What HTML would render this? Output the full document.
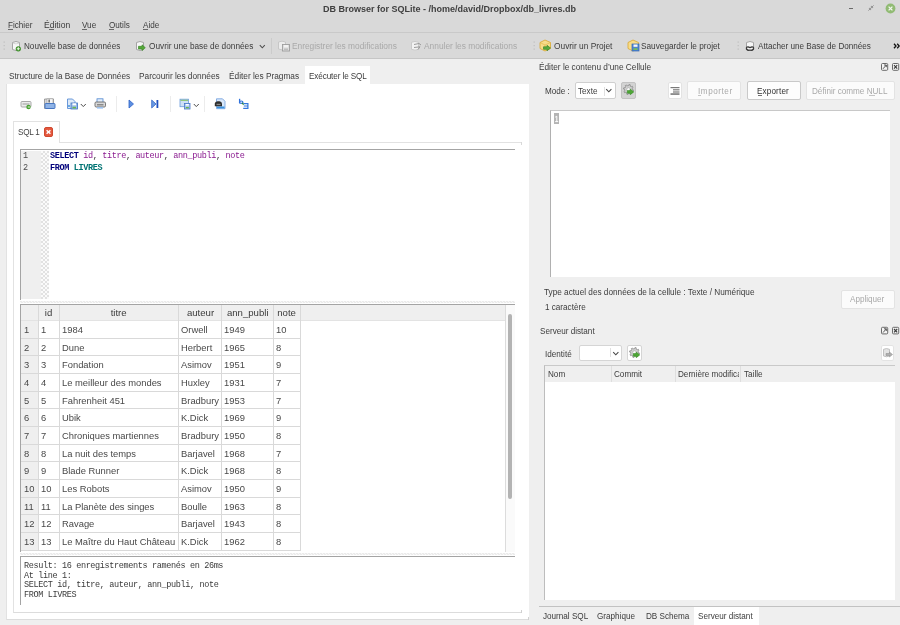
<!DOCTYPE html>
<html><head><meta charset="utf-8">
<style>
*{box-sizing:border-box;margin:0;padding:0}
html,body{width:900px;height:625px;overflow:hidden}
body{position:relative;background:#efefef;font-family:"Liberation Sans",sans-serif;font-size:8.15px;color:#3c3c3c}
.a{position:absolute}
.t{position:absolute;white-space:pre;line-height:10px;will-change:transform}
.mono{font-family:"Liberation Mono",monospace}
.dis{color:#a9a9a9}
.cell{font-size:9.4px;color:#484848}
.btn{position:absolute;background:#fbfbfb;border:1px solid #cfcfcf;border-radius:2px}
</style></head><body>

<!-- title + menu bar -->
<div class="a" style="left:0;top:0;width:900px;height:33px;background:#d9d9d9"></div>
<div class="a" style="left:0;top:32px;width:900px;height:1px;background:#c9c9c9"></div>
<div class="t" style="left:323px;top:4px;font-weight:bold;font-size:9px;color:#404040">DB Browser for SQLite - /home/david/Dropbox/db_livres.db</div>
<!-- window controls -->
<div class="a" style="left:848.5px;top:8px;width:4.5px;height:1px;background:#6a6a6a"></div>
<svg class="a" style="left:868px;top:5px" width="6" height="6" viewBox="0 0 6 6"><path d="M5.6 0.4L3.6 2.4M3.4 0.9V2.6H5.1M0.4 5.6L2.4 3.6M0.9 3.4H2.6V5.1" stroke="#8a8a8a" stroke-width="0.9" fill="none"/></svg>
<svg class="a" style="left:885px;top:3px" width="11" height="11" viewBox="0 0 11 11"><circle cx="5.5" cy="5.5" r="4.9" fill="#91bb74"/><path d="M3.6 3.6L7.4 7.4M7.4 3.6L3.6 7.4" stroke="#f4f8f0" stroke-width="1.3"/></svg>

<div class="t" style="left:8px;top:20.5px">Fichier</div>
<div class="t" style="left:44.2px;top:19.8px;font-size:8.55px">Édition</div>
<div class="t" style="left:82px;top:20.5px">Vue</div>
<div class="t" style="left:108.5px;top:20.5px">Outils</div>
<div class="t" style="left:142.5px;top:20.5px">Aide</div>


<div class="a" style="left:8px;top:29px;width:4.5px;height:1px;background:#6a6a6a"></div>
<div class="a" style="left:49px;top:29px;width:4.5px;height:1px;background:#6a6a6a"></div>
<div class="a" style="left:82px;top:29px;width:5px;height:1px;background:#6a6a6a"></div>
<div class="a" style="left:108.5px;top:29px;width:5.5px;height:1px;background:#6a6a6a"></div>
<div class="a" style="left:142.5px;top:29px;width:5px;height:1px;background:#6a6a6a"></div>
<!-- main toolbar -->
<div class="a" style="left:0;top:33px;width:900px;height:25px;background:#d9d9d9"></div>
<div class="a" style="left:0;top:58px;width:900px;height:1px;background:#c6c6c6"></div>

<!-- toolbar handles -->
<svg class="a" style="left:3px;top:41px" width="3" height="10"><rect x="0.5" y="0.5" width="1.5" height="1.2" fill="#c4c4c4"/><rect x="0.5" y="4" width="1.5" height="1.2" fill="#c4c4c4"/><rect x="0.5" y="7.5" width="1.5" height="1.2" fill="#c4c4c4"/></svg>
<svg class="a" style="left:533px;top:41px" width="3" height="10"><rect x="0.5" y="0.5" width="1.5" height="1.2" fill="#c4c4c4"/><rect x="0.5" y="4" width="1.5" height="1.2" fill="#c4c4c4"/><rect x="0.5" y="7.5" width="1.5" height="1.2" fill="#c4c4c4"/></svg>
<svg class="a" style="left:737px;top:41px" width="3" height="10"><rect x="0.5" y="0.5" width="1.5" height="1.2" fill="#c4c4c4"/><rect x="0.5" y="4" width="1.5" height="1.2" fill="#c4c4c4"/><rect x="0.5" y="7.5" width="1.5" height="1.2" fill="#c4c4c4"/></svg>
<div class="a" style="left:271px;top:38px;width:1px;height:16px;background:#cbcbcb"></div>
<svg class="a" style="left:259px;top:44px" width="7" height="6"><path d="M0.8 1.2L3.3 3.8L5.8 1.2" stroke="#505050" stroke-width="1.1" fill="none"/></svg>
<!-- icon 1: new db -->
<svg class="a" style="left:11px;top:40px" width="12" height="12" viewBox="0 0 12 12">
<path d="M1.5 2.5Q5 0.5 8.5 2.5V9.5Q5 11.5 1.5 9.5Z" fill="#f6f6f6" stroke="#9c9c9c" stroke-width="0.9"/>
<path d="M1.5 3Q5 4.8 8.5 3" stroke="#c8c8c8" stroke-width="0.7" fill="none"/>
<circle cx="7.3" cy="8.8" r="2.6" fill="#3c8f28"/><path d="M7.3 7.3V10.3M5.8 8.8H8.8" stroke="#e8f5e0" stroke-width="1.1"/>
</svg>
<!-- icon 2: open db -->
<svg class="a" style="left:135px;top:40px" width="12" height="12" viewBox="0 0 12 12">
<path d="M1.5 2.5Q5 0.5 8.5 2.5V9.5Q5 11.5 1.5 9.5Z" fill="#f6f6f6" stroke="#9c9c9c" stroke-width="0.9"/>
<path d="M3.5 6.3H7V4.8L10.3 7.7L7 10.6V9.1H3.5Z" fill="#55a83a" stroke="#2f7d1c" stroke-width="0.6"/>
</svg>
<!-- icon 3: save (disabled) -->
<svg class="a" style="left:277px;top:40px" width="14" height="12" viewBox="0 0 14 12">
<path d="M1.5 2Q5 0.3 8.5 2V9Q5 10.7 1.5 9Z" fill="#ececec" stroke="#c4c4c4" stroke-width="0.9"/>
<rect x="5.5" y="4.5" width="7" height="6.5" fill="#dedede" stroke="#9d9d9d" stroke-width="0.9"/>
<rect x="7" y="5" width="4" height="2.3" fill="#f2f2f2"/><rect x="7" y="8.5" width="4" height="2" fill="#bdbdbd"/>
</svg>
<!-- icon 4: undo (disabled) -->
<svg class="a" style="left:410px;top:40px" width="14" height="12" viewBox="0 0 14 12">
<path d="M1.5 2.3Q5 0.6 8.5 2.3V9.3Q5 11 1.5 9.3Z" fill="#f2f2f2" stroke="#c6c6c6" stroke-width="0.9"/>
<path d="M4 4.5L9 3.5L11 5M4 7.5L10 6.8L8 9.5" stroke="#9a9a9a" stroke-width="1" fill="none"/>
</svg>
<!-- icon 5: open project -->
<svg class="a" style="left:539px;top:39px" width="13" height="13" viewBox="0 0 13 13">
<path d="M1 3.5L6 1L11.5 3.5V9.5L6 12L1 9.5Z" fill="#f7dc8a" stroke="#d9a730" stroke-width="0.8"/>
<path d="M1 3.5L6 6L11.5 3.5M6 6V12" stroke="#e3b84a" stroke-width="0.7" fill="none"/>
<path d="M4.5 7.8H8V6.3L11.5 9L8 11.8V10.3H4.5Z" fill="#5aaa3f" stroke="#2f7d1c" stroke-width="0.6"/>
</svg>
<!-- icon 6: save project -->
<svg class="a" style="left:627px;top:39px" width="13" height="13" viewBox="0 0 13 13">
<path d="M1 3.5L6 1L11.5 3.5V9.5L6 12L1 9.5Z" fill="#f7dc8a" stroke="#d9a730" stroke-width="0.8"/>
<rect x="5" y="5" width="7" height="7" fill="#4f86cf" stroke="#3568b5" stroke-width="0.7"/>
<rect x="6.5" y="5.5" width="4" height="2.3" fill="#f4f7fb"/><rect x="6.5" y="9.3" width="4" height="1.6" fill="#7cc24e"/>
</svg>
<!-- icon 7: attach -->
<svg class="a" style="left:745px;top:40px" width="12" height="12" viewBox="0 0 12 12">
<path d="M1.5 2.5Q5 0.5 8.5 2.5V9.5Q5 11.5 1.5 9.5Z" fill="#f6f6f6" stroke="#9c9c9c" stroke-width="0.9"/>
<path d="M1.5 9Q1 6.5 3.5 7Q5 8 6.5 7Q9 6.5 8.5 9Q7 11 5 10Q3 11 1.5 9Z" fill="none" stroke="#3a3a3a" stroke-width="1.3"/>
</svg>

<!-- left tabs -->
<div class="a" style="left:305px;top:66px;width:65px;height:19px;background:#fff"></div>
<div class="t" style="left:9.3px;top:72px;font-size:8.22px">Structure de la Base de Données</div>
<div class="t" style="left:139px;top:71px;font-size:8.3px">Parcourir les données</div>
<div class="t" style="left:229px;top:71px;font-size:8.3px">Éditer les Pragmas</div>
<div class="t" style="left:308.8px;top:71.5px;letter-spacing:-0.1px">Exécuter le SQL</div>

<!-- left panel -->
<div class="a" style="left:6px;top:84px;width:523px;height:536px;background:#fff;border-left:1px solid #e2e2e2;border-bottom:1px solid #dcdcdc"></div>
<div class="a" style="left:528px;top:617px;width:1px;height:3px;background:#d0d0d0"></div>

<!-- SQL toolbar -->
<svg class="a" style="left:20px;top:100px" width="13" height="10" viewBox="0 0 13 10">
<rect x="1" y="1.5" width="10" height="5.5" rx="1" fill="#ececec" stroke="#a0a0a0" stroke-width="0.9"/>
<rect x="2.5" y="3" width="7" height="2" fill="#c4c4c4"/>
<circle cx="8.5" cy="7" r="2.2" fill="#46a02f"/><path d="M7.7 7H9.5M8.8 6.2L9.6 7L8.8 7.8" stroke="#e8f5e0" stroke-width="0.7" fill="none"/>
</svg>
<svg class="a" style="left:43px;top:98px" width="13" height="12" viewBox="0 0 13 12">
<path d="M1.5 1H10.5V10.5H1.5Z" fill="#d6d6d6" stroke="#8e8e8e" stroke-width="0.8"/>
<rect x="4" y="0.8" width="6" height="4.5" fill="#f6f6f6" stroke="#9c9c9c" stroke-width="0.6"/>
<rect x="5.5" y="1.5" width="1.3" height="3" fill="#555"/>
<rect x="2" y="5.5" width="10" height="5" rx="0.7" fill="#8fb3e6" stroke="#3c6fbf" stroke-width="0.9"/>
</svg>
<svg class="a" style="left:66px;top:98px" width="13" height="12" viewBox="0 0 13 12">
<path d="M1.5 1H6.5L9 3.5V10.5H1.5Z" fill="#dce9f8" stroke="#5b8fd6" stroke-width="0.9"/>
<rect x="5" y="5" width="6.5" height="6" fill="#9bbbe9" stroke="#3e72c2" stroke-width="0.8"/>
<rect x="6.5" y="5.3" width="3.5" height="2" fill="#fff"/><rect x="6.5" y="8.8" width="3.5" height="1.6" fill="#6bb84a"/>
<rect x="2" y="7.3" width="2" height="1.4" fill="#3b8ddc"/>
</svg>
<svg class="a" style="left:80px;top:102.5px" width="7" height="6"><path d="M0.8 1L3.3 3.6L5.8 1" stroke="#505050" stroke-width="1" fill="none"/></svg>
<svg class="a" style="left:94px;top:98px" width="13" height="12" viewBox="0 0 13 12">
<rect x="3" y="0.8" width="6" height="4" fill="#e3eefb" stroke="#4f86d0" stroke-width="0.8"/>
<rect x="1" y="4" width="10.5" height="5" rx="1.2" fill="#d8d8d8" stroke="#6a6a6a" stroke-width="0.9"/>
<rect x="3" y="6" width="6.5" height="1.5" fill="#8a8a8a"/>
<rect x="3" y="9" width="6" height="1.6" fill="#9cc1ee"/>
</svg>
<div class="a" style="left:116px;top:96px;width:1px;height:16px;background:#ececec"></div>
<svg class="a" style="left:128px;top:99px" width="7" height="10" viewBox="0 0 7 10"><path d="M1 1L5.5 5L1 9Z" fill="#5c8fe0" stroke="#2f62c8" stroke-width="0.8"/></svg>
<svg class="a" style="left:151px;top:99px" width="9" height="10" viewBox="0 0 9 10"><path d="M0.7 1L5 5L0.7 9Z" fill="#6a9be3" stroke="#3466c8" stroke-width="0.8"/><rect x="5.5" y="1" width="1.8" height="8" fill="#1d4fbf"/></svg>
<div class="a" style="left:170px;top:96px;width:1px;height:16px;background:#ececec"></div>
<svg class="a" style="left:179px;top:98px" width="13" height="12" viewBox="0 0 13 12">
<rect x="1" y="1.2" width="8.5" height="7.5" fill="#cfe0f6" stroke="#6c9cdc" stroke-width="0.8"/>
<rect x="1.5" y="1.8" width="7.5" height="1" fill="#84c25e"/>
<rect x="5.5" y="5.5" width="5.5" height="5.5" fill="#a9c6ee" stroke="#4677c6" stroke-width="0.8"/>
<rect x="6.8" y="6" width="3" height="1.5" fill="#fff"/><rect x="6.8" y="9" width="3" height="1.3" fill="#6bb84a"/>
</svg>
<svg class="a" style="left:192.5px;top:102.5px" width="7" height="6"><path d="M0.8 1L3.3 3.6L5.8 1" stroke="#505050" stroke-width="1" fill="none"/></svg>
<div class="a" style="left:204px;top:96px;width:1px;height:16px;background:#ececec"></div>
<svg class="a" style="left:214px;top:98px" width="13" height="12" viewBox="0 0 13 12">
<path d="M2.5 0.8H8.5L11 3.3V10.7H2.5Z" fill="#d9e8fa" stroke="#6c9cdc" stroke-width="0.8"/>
<rect x="3" y="8.5" width="7.5" height="1.8" fill="#3a92e0"/>
<path d="M0.8 5.5Q1 3.5 3.5 3.3H5.5Q7.8 3.5 8 5.5V8.3H0.8Z" fill="#2e2e2e"/>
<rect x="2.5" y="5.8" width="4" height="1.3" fill="#8a8a8a"/>
</svg>
<svg class="a" style="left:237px;top:97px" width="13" height="13" viewBox="0 0 13 13">
<path d="M2.6 1.8V6.3" stroke="#2f72dc" stroke-width="1.3"/>
<ellipse cx="4.2" cy="5.2" rx="1.7" ry="1.2" fill="none" stroke="#2f72dc" stroke-width="1.2"/>
<path d="M5.3 5.8L6.6 7.6" stroke="#2e8f24" stroke-width="1.4"/>
<path d="M6.4 6.7H10.9V11.3H6.2M6.8 9H10.6" fill="none" stroke="#3377de" stroke-width="1.2"/>
</svg>


<!-- inner tab frame -->
<div class="a" style="left:13px;top:142px;width:509px;height:471px;border-left:1px solid #e2e2e2;border-top:1px solid #e2e2e2;border-bottom:1px solid #dcdcdc"></div>
<div class="a" style="left:521px;top:142px;width:1px;height:3px;background:#d8d8d8"></div>
<div class="a" style="left:521px;top:610px;width:1px;height:3px;background:#d0d0d0"></div>
<div class="a" style="left:13px;top:121px;width:47px;height:22px;background:#fff;border:1px solid #e2e2e2;border-bottom:none"></div>
<div class="t" style="left:18px;top:127.5px;color:#444;letter-spacing:-0.25px">SQL 1</div>
<div class="a" style="left:44px;top:127px;width:9px;height:10px;background:#e4583e;border:0.7px solid #d04a30;border-radius:2px"></div>
<svg class="a" style="left:44px;top:127px" width="9" height="10"><path d="M2.6 3.2L6.4 6.8M6.4 3.2L2.6 6.8" stroke="#fff" stroke-width="1.5"/></svg>

<!-- editor -->
<div class="a" style="left:20px;top:149px;width:495px;height:151px;background:#fff;border-left:1px solid #a4a4a4;border-top:1px solid #a4a4a4"></div>
<div class="a" style="left:21px;top:151px;width:20px;height:148px;background:#efefef"></div>
<div class="a" style="left:41px;top:151px;width:8px;height:148px;background:repeating-conic-gradient(#e2e2e2 0 25%,#fbfbfb 0 50%) 0 0/4px 4px"></div>
<div class="t mono" style="left:23px;top:150px;font-size:8.5px;letter-spacing:-0.36px;line-height:12px;color:#4a4a4a">1
2</div>
<div class="t mono" style="left:49.5px;top:150px;font-size:8.5px;letter-spacing:-0.36px;line-height:12px;color:#303030"><b style="color:#00007a">SELECT</b> <span style="color:#8a1a8f">id</span>, <span style="color:#8a1a8f">titre</span>, <span style="color:#8a1a8f">auteur</span>, <span style="color:#8a1a8f">ann_publi</span>, <span style="color:#8a1a8f">note</span>
<b style="color:#00007a">FROM</b> <b style="color:#007373;font-weight:600">LIVRES</b></div>

<!-- splitter 1 -->
<div class="a" style="left:20px;top:300px;width:495px;height:4px;background-image:repeating-linear-gradient(90deg,#ebebeb 0 2px,#f8f8f8 2px 3px),repeating-linear-gradient(90deg,#f8f8f8 0 1px,#ececec 1px 3px);background-size:100% 1px,100% 1px;background-position:0 1px,0 2px;background-repeat:no-repeat"></div>

<!-- grid -->
<div class="a" style="left:20px;top:304px;width:495px;height:248px;background:#fff;border-left:1px solid #a4a4a4;border-top:1px solid #a4a4a4"></div>
<div class="a" style="left:21px;top:305px;width:484px;height:15px;background:#efefef"></div>
<div class="a" style="left:21px;top:320px;width:17px;height:231px;background:#efefef"></div>
<div class="a" style="left:506px;top:305px;width:9px;height:247px;background:#fafafa"></div>
<div class="a" style="left:505px;top:305px;width:1px;height:247px;background:#dcdcdc"></div>
<div class="a" style="left:508px;top:314px;width:4px;height:185px;background:#b3b3b3;border-radius:2px"></div>
<div class="a" style="left:21px;top:320px;width:484px;height:1px;background:#e3e3e3"></div>
<div class="a" style="left:38px;top:305px;width:1px;height:246px;background:#d9d9d9"></div>
<div class="a" style="left:59px;top:305px;width:1px;height:246px;background:#d9d9d9"></div>
<div class="a" style="left:178px;top:305px;width:1px;height:246px;background:#d9d9d9"></div>
<div class="a" style="left:221px;top:305px;width:1px;height:246px;background:#d9d9d9"></div>
<div class="a" style="left:273px;top:305px;width:1px;height:246px;background:#d9d9d9"></div>
<div class="a" style="left:300px;top:305px;width:1px;height:246px;background:#d9d9d9"></div>
<div class="a" style="left:21px;top:338px;width:280px;height:1px;background:#d9d9d9"></div>
<div class="a" style="left:21px;top:355px;width:280px;height:1px;background:#d9d9d9"></div>
<div class="a" style="left:21px;top:373px;width:280px;height:1px;background:#d9d9d9"></div>
<div class="a" style="left:21px;top:391px;width:280px;height:1px;background:#d9d9d9"></div>
<div class="a" style="left:21px;top:408px;width:280px;height:1px;background:#d9d9d9"></div>
<div class="a" style="left:21px;top:426px;width:280px;height:1px;background:#d9d9d9"></div>
<div class="a" style="left:21px;top:444px;width:280px;height:1px;background:#d9d9d9"></div>
<div class="a" style="left:21px;top:461px;width:280px;height:1px;background:#d9d9d9"></div>
<div class="a" style="left:21px;top:479px;width:280px;height:1px;background:#d9d9d9"></div>
<div class="a" style="left:21px;top:497px;width:280px;height:1px;background:#d9d9d9"></div>
<div class="a" style="left:21px;top:514px;width:280px;height:1px;background:#d9d9d9"></div>
<div class="a" style="left:21px;top:532px;width:280px;height:1px;background:#d9d9d9"></div>
<div class="a" style="left:21px;top:550px;width:280px;height:1px;background:#d9d9d9"></div>
<div class="t" style="left:38.3px;width:21.0px;text-align:center;top:308.3px;font-size:9.6px">id</div>
<div class="t" style="left:59.3px;width:119.3px;text-align:center;top:308.3px;font-size:9.6px">titre</div>
<div class="t" style="left:178.6px;width:43.0px;text-align:center;top:308.3px;font-size:9.6px">auteur</div>
<div class="t" style="left:221.6px;width:51.50000000000003px;text-align:center;top:308.3px;font-size:9.6px">ann_publi</div>
<div class="t" style="left:273.1px;width:27.19999999999999px;text-align:center;top:308.3px;font-size:9.6px">note</div>
<div class="t cell" style="left:23.5px;top:325.00px">1</div>
<div class="t cell" style="left:41px;top:325.00px">1</div>
<div class="t cell" style="left:61.5px;top:325.00px">1984</div>
<div class="t cell" style="left:180.5px;top:325.00px">Orwell</div>
<div class="t cell" style="left:223.5px;top:325.00px">1949</div>
<div class="t cell" style="left:275.5px;top:325.00px">10</div>
<div class="t cell" style="left:23.5px;top:342.67px">2</div>
<div class="t cell" style="left:41px;top:342.67px">2</div>
<div class="t cell" style="left:61.5px;top:342.67px">Dune</div>
<div class="t cell" style="left:180.5px;top:342.67px">Herbert</div>
<div class="t cell" style="left:223.5px;top:342.67px">1965</div>
<div class="t cell" style="left:275.5px;top:342.67px">8</div>
<div class="t cell" style="left:23.5px;top:360.34px">3</div>
<div class="t cell" style="left:41px;top:360.34px">3</div>
<div class="t cell" style="left:61.5px;top:360.34px">Fondation</div>
<div class="t cell" style="left:180.5px;top:360.34px">Asimov</div>
<div class="t cell" style="left:223.5px;top:360.34px">1951</div>
<div class="t cell" style="left:275.5px;top:360.34px">9</div>
<div class="t cell" style="left:23.5px;top:378.01px">4</div>
<div class="t cell" style="left:41px;top:378.01px">4</div>
<div class="t cell" style="left:61.5px;top:378.01px">Le meilleur des mondes</div>
<div class="t cell" style="left:180.5px;top:378.01px">Huxley</div>
<div class="t cell" style="left:223.5px;top:378.01px">1931</div>
<div class="t cell" style="left:275.5px;top:378.01px">7</div>
<div class="t cell" style="left:23.5px;top:395.68px">5</div>
<div class="t cell" style="left:41px;top:395.68px">5</div>
<div class="t cell" style="left:61.5px;top:395.68px">Fahrenheit 451</div>
<div class="t cell" style="left:180.5px;top:395.68px">Bradbury</div>
<div class="t cell" style="left:223.5px;top:395.68px">1953</div>
<div class="t cell" style="left:275.5px;top:395.68px">7</div>
<div class="t cell" style="left:23.5px;top:413.35px">6</div>
<div class="t cell" style="left:41px;top:413.35px">6</div>
<div class="t cell" style="left:61.5px;top:413.35px">Ubik</div>
<div class="t cell" style="left:180.5px;top:413.35px">K.Dick</div>
<div class="t cell" style="left:223.5px;top:413.35px">1969</div>
<div class="t cell" style="left:275.5px;top:413.35px">9</div>
<div class="t cell" style="left:23.5px;top:431.02px">7</div>
<div class="t cell" style="left:41px;top:431.02px">7</div>
<div class="t cell" style="left:61.5px;top:431.02px">Chroniques martiennes</div>
<div class="t cell" style="left:180.5px;top:431.02px">Bradbury</div>
<div class="t cell" style="left:223.5px;top:431.02px">1950</div>
<div class="t cell" style="left:275.5px;top:431.02px">8</div>
<div class="t cell" style="left:23.5px;top:448.69px">8</div>
<div class="t cell" style="left:41px;top:448.69px">8</div>
<div class="t cell" style="left:61.5px;top:448.69px">La nuit des temps</div>
<div class="t cell" style="left:180.5px;top:448.69px">Barjavel</div>
<div class="t cell" style="left:223.5px;top:448.69px">1968</div>
<div class="t cell" style="left:275.5px;top:448.69px">7</div>
<div class="t cell" style="left:23.5px;top:466.36px">9</div>
<div class="t cell" style="left:41px;top:466.36px">9</div>
<div class="t cell" style="left:61.5px;top:466.36px">Blade Runner</div>
<div class="t cell" style="left:180.5px;top:466.36px">K.Dick</div>
<div class="t cell" style="left:223.5px;top:466.36px">1968</div>
<div class="t cell" style="left:275.5px;top:466.36px">8</div>
<div class="t cell" style="left:23.5px;top:484.03px">10</div>
<div class="t cell" style="left:41px;top:484.03px">10</div>
<div class="t cell" style="left:61.5px;top:484.03px">Les Robots</div>
<div class="t cell" style="left:180.5px;top:484.03px">Asimov</div>
<div class="t cell" style="left:223.5px;top:484.03px">1950</div>
<div class="t cell" style="left:275.5px;top:484.03px">9</div>
<div class="t cell" style="left:23.5px;top:501.70px">11</div>
<div class="t cell" style="left:41px;top:501.70px">11</div>
<div class="t cell" style="left:61.5px;top:501.70px">La Planète des singes</div>
<div class="t cell" style="left:180.5px;top:501.70px">Boulle</div>
<div class="t cell" style="left:223.5px;top:501.70px">1963</div>
<div class="t cell" style="left:275.5px;top:501.70px">8</div>
<div class="t cell" style="left:23.5px;top:519.37px">12</div>
<div class="t cell" style="left:41px;top:519.37px">12</div>
<div class="t cell" style="left:61.5px;top:519.37px">Ravage</div>
<div class="t cell" style="left:180.5px;top:519.37px">Barjavel</div>
<div class="t cell" style="left:223.5px;top:519.37px">1943</div>
<div class="t cell" style="left:275.5px;top:519.37px">8</div>
<div class="t cell" style="left:23.5px;top:537.04px">13</div>
<div class="t cell" style="left:41px;top:537.04px">13</div>
<div class="t cell" style="left:61.5px;top:537.04px">Le Maître du Haut Château</div>
<div class="t cell" style="left:180.5px;top:537.04px">K.Dick</div>
<div class="t cell" style="left:223.5px;top:537.04px">1962</div>
<div class="t cell" style="left:275.5px;top:537.04px">8</div>

<!-- splitter 2 -->
<div class="a" style="left:20px;top:552px;width:495px;height:4px;background-image:repeating-linear-gradient(90deg,#ebebeb 0 2px,#f8f8f8 2px 3px),repeating-linear-gradient(90deg,#f8f8f8 0 1px,#ececec 1px 3px);background-size:100% 1px,100% 1px;background-position:0 1px,0 2px;background-repeat:no-repeat"></div>

<!-- messages -->
<div class="a" style="left:20px;top:556px;width:495px;height:49px;background:#fff;border-left:1px solid #a4a4a4;border-top:1px solid #a4a4a4"></div>
<div class="t mono" style="left:23.5px;top:561.5px;font-size:8.5px;letter-spacing:-0.36px;line-height:9.65px;color:#3a3a3a">Result: 16 enregistrements ramenés en 26ms
At line 1:
SELECT id, titre, auteur, ann_publi, note
FROM LIVRES</div>

<!-- right dock -->
<div class="t" style="left:539.4px;top:63px;font-size:8.28px">Éditer le contenu d’une Cellule</div>

<div class="t" style="left:544.5px;top:86.5px">Mode :</div>
<div class="btn" style="left:575px;top:82px;width:41px;height:16.5px;background:#fff"></div>
<div class="t" style="left:577.5px;top:86.5px">Texte</div>
<div class="a" style="left:604px;top:86.5px;width:1px;height:9px;background:#e0e0e0"></div>
<svg class="a" style="left:605px;top:88px" width="8" height="5"><path d="M1.2 1.2L3.8 3.8L6.4 1.2" stroke="#484848" stroke-width="1.1" fill="none"/></svg>
<div class="btn" style="left:621px;top:82px;width:15px;height:16.5px;background:#d3d3d3;border-color:#c2c2c2"></div>
<div class="btn" style="left:668px;top:82px;width:14px;height:17px;background:#fff;border-color:#e3e3e3"></div>
<div class="btn" style="left:687px;top:81px;width:54px;height:18.5px;border-color:#e3e3e3"></div>
<div class="t dis" style="left:697.5px;top:86.5px;letter-spacing:0.55px">Importer</div>
<div class="btn" style="left:746.5px;top:81px;width:54px;height:18.5px;background:#fdfdfd;border-color:#c9c9c9"></div>
<div class="t" style="left:757px;top:86.5px;color:#303030;letter-spacing:0.15px">Exporter</div>
<div class="btn" style="left:806px;top:81px;width:89px;height:18.5px;border-color:#e3e3e3"></div>
<div class="t dis" style="left:812px;top:86.5px">Définir comme NULL</div>


<div class="a" style="left:697.5px;top:95px;width:3px;height:1px;background:#c4c4c4"></div>
<div class="a" style="left:757.5px;top:95px;width:4.5px;height:1px;background:#707070"></div>
<div class="a" style="left:868.5px;top:95px;width:6px;height:1px;background:#c4c4c4"></div>
<div class="a" style="left:550px;top:110px;width:340px;height:167px;background:#fff;border-left:1px solid #b0b0b0;border-top:1px solid #c8c8c8"></div>
<div class="a" style="left:554px;top:113px;width:5px;height:10.5px;background:#b4b4b4"></div>
<svg class="a" style="left:554px;top:113px" width="5" height="11"><path d="M1.2 4.2L2.8 3.2V8.6M1.2 8.6H4.2" stroke="#fff" stroke-width="1" fill="none"/></svg>

<div class="t" style="left:544.3px;top:287.5px;font-size:8.22px">Type actuel des données de la cellule : Texte / Numérique</div>
<div class="t" style="left:544.5px;top:302.5px">1 caractère</div>
<div class="btn" style="left:840.5px;top:289.5px;width:54px;height:19px;border-color:#e3e3e3"></div>
<div class="t dis" style="left:849.5px;top:295px">Appliquer</div>

<div class="t" style="left:540px;top:327px">Serveur distant</div>
<div class="t" style="left:544.5px;top:350px">Identité</div>
<div class="btn" style="left:578.5px;top:344.5px;width:43px;height:16px;background:#fff;border-color:#d5d5d5"></div>
<div class="a" style="left:610px;top:348px;width:1px;height:9px;background:#e0e0e0"></div>
<svg class="a" style="left:611.5px;top:350.5px" width="8" height="5"><path d="M1.2 1.2L3.8 3.8L6.4 1.2" stroke="#484848" stroke-width="1.1" fill="none"/></svg>
<div class="btn" style="left:627px;top:344.5px;width:14.5px;height:16px;background:#fff;border-color:#d5d5d5"></div>
<div class="btn" style="left:880.8px;top:344.8px;width:13.5px;height:16.6px;background:#fff;border-color:#e3e3e3"></div>

<div class="a" style="left:544px;top:365px;width:351px;height:234.5px;background:#fff;border-left:1px solid #bdbdbd;border-top:1px solid #c9c9c9"></div>
<div class="a" style="left:545px;top:366px;width:350px;height:16px;background:#efefef"></div>
<div class="a" style="left:611px;top:366px;width:1px;height:16px;background:#dedede"></div>
<div class="a" style="left:675px;top:366px;width:1px;height:16px;background:#dedede"></div>
<div class="a" style="left:740px;top:366px;width:1px;height:16px;background:#dedede"></div>
<div class="t" style="left:548px;top:370px">Nom</div>
<div class="t" style="left:613.5px;top:370px">Commit</div>
<div class="t" style="left:678px;top:370px;width:61px;overflow:hidden">Dernière modification</div>
<div class="t" style="left:744px;top:370px">Taille</div>

<!-- bottom tabs -->
<div class="a" style="left:539px;top:606px;width:361px;height:1px;background:#c2c2c2"></div>
<div class="a" style="left:694px;top:607px;width:65px;height:18px;background:#fff"></div>
<div class="t" style="left:543px;top:611.5px">Journal SQL</div>
<div class="t" style="left:596.5px;top:611.5px">Graphique</div>
<div class="t" style="left:645.5px;top:611.5px">DB Schema</div>
<div class="t" style="left:698px;top:611.5px">Serveur distant</div>

<!-- dock buttons -->
<svg class="a" style="left:880px;top:62px" width="20" height="10" viewBox="0 0 20 10">
<rect x="1.5" y="1.5" width="6.2" height="6.8" rx="1" fill="#f4f4f4" stroke="#5a5a5a" stroke-width="0.9"/>
<path d="M3 6.8L6.3 3M4 3H6.3V5.2" stroke="#4a4a4a" stroke-width="0.9" fill="none"/>
<rect x="12.5" y="1.5" width="6.2" height="6.8" rx="1" fill="#f4f4f4" stroke="#5a5a5a" stroke-width="0.9"/>
<path d="M14 3.2L17.2 6.6M17.2 3.2L14 6.6" stroke="#3a3a3a" stroke-width="1.1"/>
</svg>
<svg class="a" style="left:880px;top:326px" width="20" height="10" viewBox="0 0 20 10">
<rect x="1.5" y="1.3" width="6.2" height="6.6" rx="1" fill="#f4f4f4" stroke="#5a5a5a" stroke-width="0.9"/>
<path d="M3 6.6L6.3 2.8M4 2.8H6.3V5" stroke="#4a4a4a" stroke-width="0.9" fill="none"/>
<rect x="12.5" y="1.3" width="6.2" height="6.6" rx="1" fill="#f4f4f4" stroke="#5a5a5a" stroke-width="0.9"/>
<path d="M14 3L17.2 6.4M17.2 3L14 6.4" stroke="#3a3a3a" stroke-width="1.1"/>
</svg>
<svg class="a" style="left:623px;top:84px" width="12" height="12" viewBox="0 0 12 12">
<path d="M9.30 5.50L10.48 5.97L10.19 7.23L8.93 7.14L8.19 8.19L8.69 9.35L7.59 10.04L6.76 9.09L5.50 9.30L5.03 10.48L3.77 10.19L3.86 8.93L2.81 8.19L1.65 8.69L0.96 7.59L1.91 6.76L1.70 5.50L0.52 5.03L0.81 3.77L2.07 3.86L2.81 2.81L2.31 1.65L3.41 0.96L4.24 1.91L5.50 1.70L5.97 0.52L7.23 0.81L7.14 2.07L8.19 2.81L9.35 2.31L10.04 3.41L9.09 4.24Z" fill="#d2d2d2" stroke="#7e7e7e" stroke-width="0.7"/>
<circle cx="5.5" cy="5.5" r="1.8" fill="#fafafa" stroke="#9a9a9a" stroke-width="0.5"/>
<path d="M4.3 6.6H7.2V5.1L10.8 7.9L7.2 10.7V9.2H4.3Z" fill="#4fa736" stroke="#2d8a1c" stroke-width="0.5"/>
</svg><svg class="a" style="left:629px;top:347px" width="12" height="12" viewBox="0 0 12 12">
<path d="M9.30 5.50L10.48 5.97L10.19 7.23L8.93 7.14L8.19 8.19L8.69 9.35L7.59 10.04L6.76 9.09L5.50 9.30L5.03 10.48L3.77 10.19L3.86 8.93L2.81 8.19L1.65 8.69L0.96 7.59L1.91 6.76L1.70 5.50L0.52 5.03L0.81 3.77L2.07 3.86L2.81 2.81L2.31 1.65L3.41 0.96L4.24 1.91L5.50 1.70L5.97 0.52L7.23 0.81L7.14 2.07L8.19 2.81L9.35 2.31L10.04 3.41L9.09 4.24Z" fill="#d2d2d2" stroke="#7e7e7e" stroke-width="0.7"/>
<circle cx="5.5" cy="5.5" r="1.8" fill="#fafafa" stroke="#9a9a9a" stroke-width="0.5"/>
<path d="M4.3 6.6H7.2V5.1L10.8 7.9L7.2 10.7V9.2H4.3Z" fill="#4fa736" stroke="#2d8a1c" stroke-width="0.5"/>
</svg>
<svg class="a" style="left:669px;top:85px" width="12" height="11" viewBox="0 0 12 11">
<rect x="1.5" y="2" width="9" height="1.2" fill="#7a7a7a"/><rect x="4" y="4.2" width="6.5" height="1.2" fill="#7a7a7a"/><rect x="4" y="6.4" width="6.5" height="1.2" fill="#7a7a7a"/><rect x="1.5" y="8.4" width="9" height="1.3" fill="#5a5a5a"/>
</svg>
<svg class="a" style="left:882px;top:347px" width="12" height="12" viewBox="0 0 12 12">
<path d="M1.5 2.3Q4.5 0.8 7.5 2.3V9Q4.5 10.5 1.5 9Z" fill="#e4e4e4" stroke="#b5b5b5" stroke-width="0.8"/>
<path d="M4 6.5H7.5V5L10.5 7.5L7.5 10V8.5H4Z" fill="#b0b0b0" stroke="#8a8a8a" stroke-width="0.5"/>
</svg>

<div class="t" style="left:23.5px;top:42px">Nouvelle base de données</div>
<div class="t" style="left:148.5px;top:42px;font-size:8.28px">Ouvrir une base de données</div>
<div class="t dis" style="left:291.5px;top:41px;font-size:8.36px">Enregistrer les modifications</div>
<div class="t dis" style="left:424px;top:41px;font-size:8.38px">Annuler les modifications</div>
<div class="t" style="left:553.5px;top:41px;font-size:8.35px">Ouvrir un Projet</div>
<div class="t" style="left:641px;top:42px;font-size:8.25px">Sauvegarder le projet</div>
<div class="t" style="left:757.5px;top:42px">Attacher une Base de Données</div>
<svg class="a" style="left:893px;top:43px" width="7" height="6" viewBox="0 0 7 6"><path d="M1 0.8L3 3L1 5.2M4.2 0.8L6.2 3L4.2 5.2" stroke="#111" stroke-width="1.3" fill="none"/></svg>


</body></html>
